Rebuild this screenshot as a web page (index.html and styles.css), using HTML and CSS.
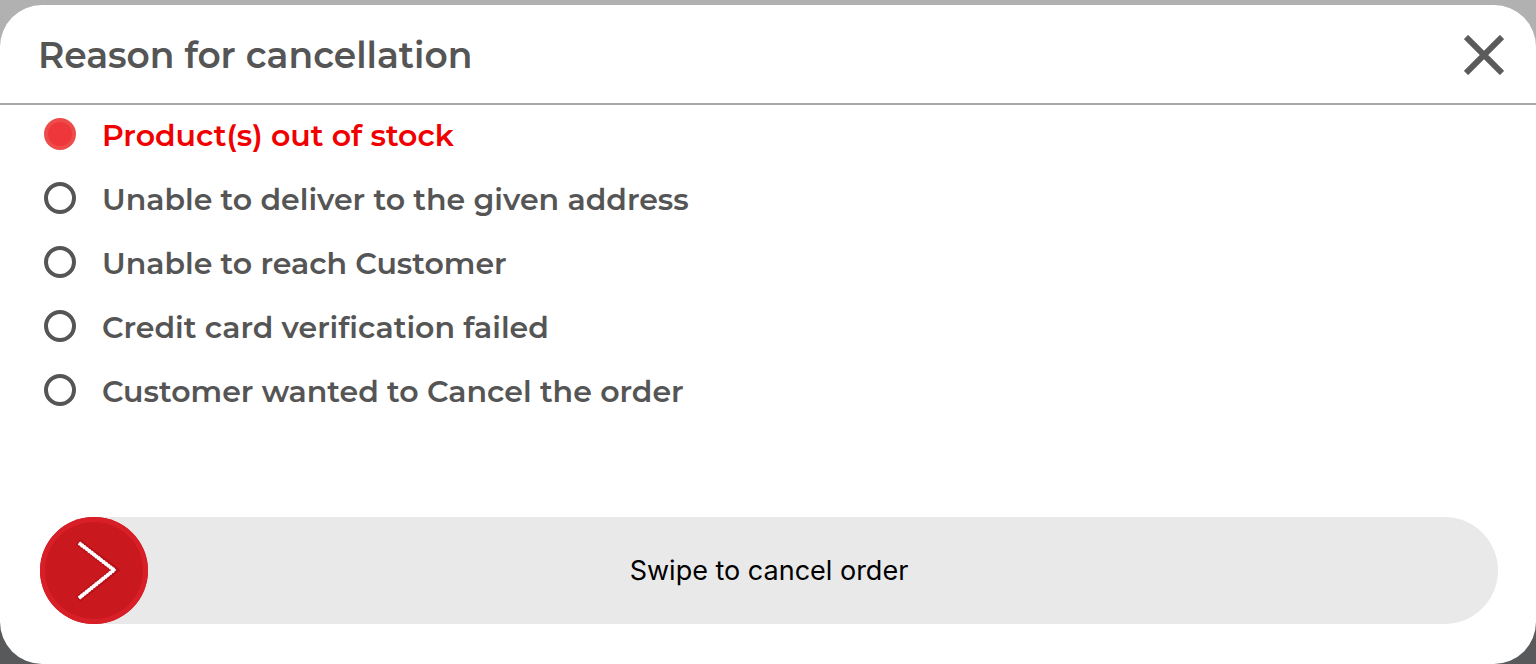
FILE: index.html
```html
<!DOCTYPE html>
<html lang="en">
<head>
<meta charset="utf-8">
<meta name="viewport" content="width=device-width, initial-scale=1">
<title>Reason for cancellation</title>
<link rel="stylesheet" href="styles.css">
</head>
<body>
<form class="sheet">
  <header class="header">
    <h1 class="title">Reason for cancellation</h1>
    <button class="close" type="button" aria-label="Close">
      <svg viewBox="0 0 40 40" width="40" height="40" aria-hidden="true"><path d="M2 2L38 38M38 2L2 38" fill="none" stroke="#5b5b5b" stroke-width="6"/></svg>
    </button>
  </header>
  <div class="reasons" role="radiogroup" aria-label="Reason for cancellation">
    <label class="reason"><input class="radio" type="radio" name="reason" checked><span class="label">Product(s) out of stock</span></label>
    <label class="reason"><input class="radio" type="radio" name="reason"><span class="label">Unable to deliver to the given address</span></label>
    <label class="reason"><input class="radio" type="radio" name="reason"><span class="label">Unable to reach Customer</span></label>
    <label class="reason"><input class="radio" type="radio" name="reason"><span class="label">Credit card verification failed</span></label>
    <label class="reason"><input class="radio" type="radio" name="reason"><span class="label">Customer wanted to Cancel the order</span></label>
  </div>
  <div class="swipe">
    <button class="thumb" type="button" aria-label="Swipe to cancel order">
      <svg viewBox="0 0 108 107" width="108" height="107" aria-hidden="true"><path d="M38 25L75 53L38 82" fill="none" stroke="#b80f18" stroke-width="7"/><path d="M39 26L74 53L39 81" fill="none" stroke="#fff" stroke-width="4" stroke-dasharray="2 1"/><path d="M39 26L74 53L39 81" fill="none" stroke="#fff" stroke-width="3"/></svg>
    </button>
    <span class="swipe-text">Swipe to cancel order</span>
  </div>
</form>
</body>
</html>
```
FILE: styles.css
```css
* {
  box-sizing: border-box;
}

body {
  margin: 0;
  min-height: 100vh;
  padding-top: 5px;
  background: linear-gradient(#b1b1b1 50%, #58595b 50%);
  color: #555;
  font-family: Montserrat, Inter, sans-serif;
  font-variant-ligatures: none;
}

.sheet {
  border-radius: 42px;
  background: #fff;
  padding-bottom: 40px;
}

.header {
  display: flex;
  align-items: center;
  justify-content: space-between;
  height: 100px;
  padding: 2px 32px 0 38px;
  border-bottom: 2px solid #a8a8a8;
}

.title {
  margin: 0;
  font-size: 36px;
  font-weight: 600;
  line-height: 48px;
}

.close {
  display: flex;
  padding: 0;
  border: 0;
  background: none;
}

.reasons {
  display: flex;
  flex-direction: column;
  gap: 32px;
  padding: 13px 44px 0;
}

.reason {
  display: flex;
  align-items: center;
  gap: 26px;
  height: 32px;
}

.radio {
  appearance: none;
  flex: none;
  width: 32px;
  height: 32px;
  margin: 0;
  border: 4px solid #555;
  border-radius: 50%;
}

.radio:checked {
  border-color: #ee4b4b;
  background: #ee373b;
}

.label {
  padding-top: 3px;
  font-size: 30px;
  font-weight: 600;
  line-height: 32px;
}

.radio:checked + .label {
  color: #f00000;
}

.swipe {
  display: grid;
  align-items: center;
  height: 107px;
  margin: 111px 38px 0 40px;
  border-radius: 54px;
  background: #e9e9e9;
}

.swipe > * {
  grid-area: 1 / 1;
}

.swipe-text {
  justify-self: center;
  color: #000;
  font-family: Inter, sans-serif;
  font-size: 27px;
  line-height: 36px;
}

.thumb {
  width: 108px;
  height: 107px;
  padding: 0;
  border: 0;
  border-radius: 50%;
  background: #c9181e;
  box-shadow: inset 0 0 0 5px #d81f28;
}

.thumb svg {
  display: block;
}
```
